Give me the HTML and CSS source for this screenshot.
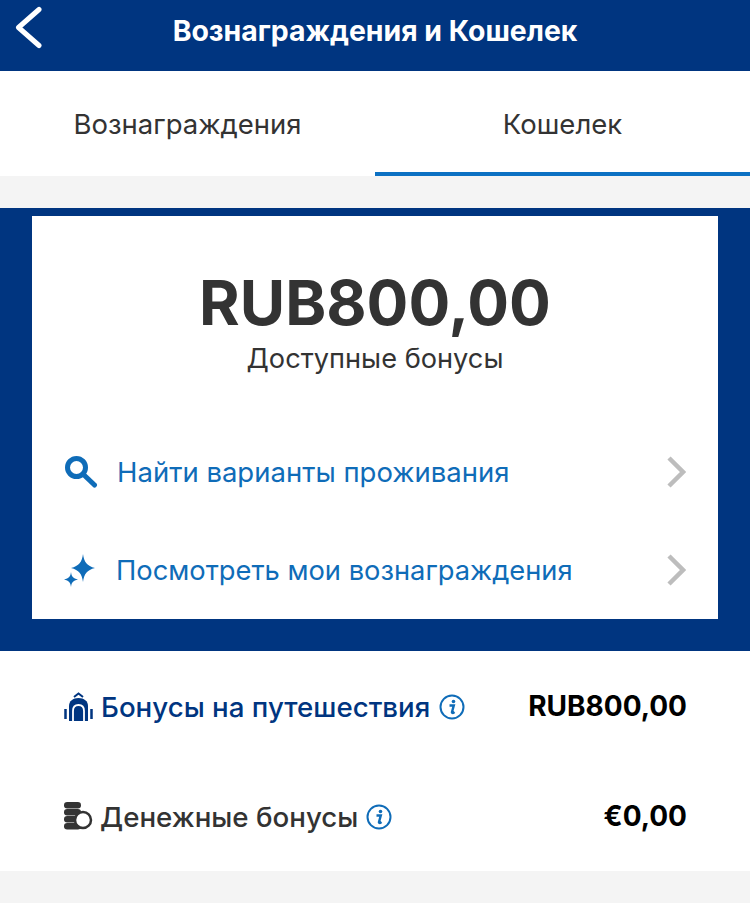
FILE: index.html
```html
<!DOCTYPE html>
<html lang="ru">
<head>
  <meta charset="UTF-8">
  <title>Вознаграждения и Кошелек</title>
  <link rel="stylesheet" href="styles.css">
</head>
<body>
  <div class="page">
    <header class="topbar">
      <svg class="back-icon" width="30" height="46" viewBox="0 0 30 46"><path d="M24 3.500 L3.500 21.500 L24 39.500" fill="none" stroke="#fff" stroke-width="5" stroke-linecap="round" stroke-linejoin="round"/></svg>
      <h1 class="topbar-title">Вознаграждения и Кошелек</h1>
    </header>

    <nav class="tabs">
      <div class="tab">Вознаграждения</div>
      <div class="tab tab-active">Кошелек</div>
    </nav>

    <div class="gap-band"></div>

    <section class="summary">
      <div class="card">
        <div class="balance">RUB800,00</div>
        <div class="balance-label">Доступные бонусы</div>
        <div class="links">
          <div class="link-row">
            <svg class="link-icon" width="34" height="34" viewBox="0 0 34 34"><circle cx="12.500" cy="12.500" r="9" fill="none" stroke="#0f6cb8" stroke-width="5"/><path d="M19.500 19.500 L30.500 30" stroke="#0f6cb8" stroke-width="5" stroke-linecap="round"/></svg>
            <span class="link-text">Найти варианты проживания</span>
            <svg class="chevron" width="20" height="34" viewBox="0 0 20 34"><path d="M3 3 L17 17 L3 31" fill="none" stroke="#bdbdbd" stroke-width="4.500"/></svg>
          </div>
          <div class="link-row">
            <svg class="link-icon" width="34" height="34" viewBox="0 0 34 34"><path d="M19 1 C20 9 23 13 31 15 C23 17 20 21 19 29 C18 21 15 17 7 15 C15 13 18 9 19 1 Z" fill="#0f6cb8"/><path d="M7 19 C7.500 23.500 9 25.500 14 26.500 C9 27.500 7.500 29.500 7 34 C6.500 29.500 5 27.500 0 26.500 C5 25.500 6.500 23.500 7 19 Z" fill="#0f6cb8"/></svg>
            <span class="link-text link-text-wide">Посмотреть мои вознаграждения</span>
            <svg class="chevron" width="20" height="34" viewBox="0 0 20 34"><path d="M3 3 L17 17 L3 31" fill="none" stroke="#bdbdbd" stroke-width="4.500"/></svg>
          </div>
        </div>
      </div>
    </section>

    <section class="bonuses">
      <div class="bonus-row bonus-travel">
        <svg class="bonus-icon" width="30" height="32" viewBox="0 0 30 32"><path d="M11 6 L15.500 2.500 L20 6" fill="none" stroke="#003580" stroke-width="2"/><path d="M6 30 V15 C6 10 10 7 15.500 7 C21 7 25 10 25 15 V30 Z" fill="#003580"/><path d="M10 30 V20 C10 16 12 14 15.500 14 C19 14 21 16 21 20 V30" fill="none" stroke="#fff" stroke-width="1.800"/><path d="M2.500 18 V28 M28.500 18 V28" stroke="#003580" stroke-width="2.500"/></svg>
        <span class="bonus-name">Бонусы на путешествия</span>
        <svg class="info-icon" width="26" height="26" viewBox="0 0 26 26"><circle cx="13" cy="13" r="11.500" fill="none" stroke="#0f6cb8" stroke-width="2"/><circle cx="14.500" cy="7.500" r="1.800" fill="#0f6cb8"/><path d="M10.500 11.500 H14.800 L13 18 C12.800 19 13.500 19.500 15.500 18" fill="none" stroke="#0f6cb8" stroke-width="2.400"/></svg>
        <span class="bonus-value">RUB800,00</span>
      </div>
      <div class="bonus-row bonus-cash">
        <svg class="bonus-icon" width="30" height="32" viewBox="0 0 30 32"><g fill="#333"><rect x="1" y="1" width="17" height="6.500" rx="3.200"/><rect x="1" y="8" width="17" height="6.500" rx="3.200"/><rect x="1" y="15" width="17" height="6.500" rx="3.200"/><rect x="1" y="22" width="17" height="6.500" rx="3.200"/></g><circle cx="20" cy="19" r="8" fill="#fff" stroke="#333" stroke-width="2.500"/></svg>
        <span class="bonus-name">Денежные бонусы</span>
        <svg class="info-icon" width="26" height="26" viewBox="0 0 26 26"><circle cx="13" cy="13" r="11.500" fill="none" stroke="#0f6cb8" stroke-width="2"/><circle cx="14.500" cy="7.500" r="1.800" fill="#0f6cb8"/><path d="M10.500 11.500 H14.800 L13 18 C12.800 19 13.500 19.500 15.500 18" fill="none" stroke="#0f6cb8" stroke-width="2.400"/></svg>
        <span class="bonus-value">€0,00</span>
      </div>
    </section>

    <div class="gap-band"></div>
  </div>
</body>
</html>
```

FILE: styles.css
```css
html, body {
  margin: 0;
  padding: 0;
  background: #fff;
}

.page {
  width: 750px;
  height: 911px;
  overflow: hidden;
  font-family: Inter, "Liberation Sans", sans-serif;
  color: #333;
}

.topbar {
  height: 71px;
  background: #003580;
  position: relative;
  display: flex;
  align-items: center;
  justify-content: center;
}

.back-icon {
  position: absolute;
  left: 15px;
  top: 6px;
}

.topbar-title {
  margin: 0 0 10px;
  font-size: 28.400px;
  font-weight: 700;
  color: #fff;
}

.tabs {
  height: 105px;
  display: flex;
}

.tab {
  flex: 1;
  display: flex;
  justify-content: center;
  padding-top: 37px;
  box-sizing: border-box;
  font-size: 27.500px;
  line-height: 33px;
}

.tab-active {
  border-bottom: 4px solid #0c71c3;
}

.gap-band {
  height: 32px;
  background: #f4f4f4;
}

.summary {
  background: #003580;
  padding: 8px 32px 32px;
}

.card {
  background: #fff;
  height: 403px;
  box-sizing: border-box;
  padding: 49px 32px 0;
  display: flex;
  flex-direction: column;
  align-items: center;
}

.balance {
  font-size: 62px;
  font-weight: 700;
  line-height: 76px;
}

.balance-label {
  font-size: 27.200px;
  line-height: 32px;
  margin-top: 2px;
}

.links {
  width: 100%;
  margin-top: 80px;
  display: flex;
  flex-direction: column;
  gap: 64px;
}

.link-row {
  height: 34px;
  display: flex;
  align-items: center;
}

.link-icon {
  flex: none;
}

.link-text {
  flex: 1;
  margin-left: 19px;
  font-size: 27.500px;
  color: #0f6cb8;
}

.link-text-wide {
  margin-left: 18px;
  font-size: 27.300px;
}

.chevron {
  flex: none;
}

.bonuses {
  height: 220px;
  box-sizing: border-box;
  padding: 40px 63px 0;
  display: flex;
  flex-direction: column;
  gap: 78px;
}

.bonus-row {
  height: 32px;
  display: flex;
  align-items: center;
}

.bonus-icon {
  flex: none;
}

.bonus-name {
  margin-left: 8px;
  font-size: 27.700px;
  font-weight: 500;
}

.bonus-travel .bonus-name {
  color: #003580;
}

.bonus-cash .bonus-name {
  margin-left: 7px;
}

.info-icon {
  flex: none;
  margin-left: 9px;
}

.bonus-cash .info-icon {
  margin-left: 8px;
}

.bonus-value {
  margin-left: auto;
  margin-bottom: 2px;
  font-size: 28px;
  font-weight: 700;
  color: #000;
}
```
